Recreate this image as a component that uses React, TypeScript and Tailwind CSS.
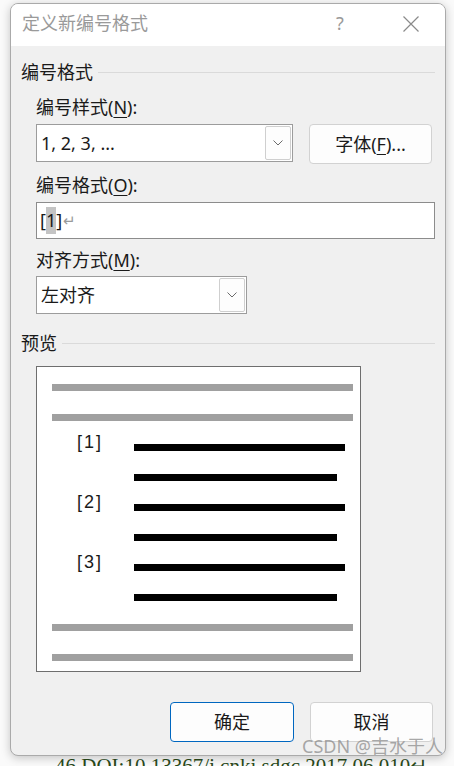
import React from "react";

const Chevron = () => (
  <svg width="10" height="6" viewBox="0 0 10 6" fill="none">
    <path d="M0.5 0.5 L5 5 L9.5 0.5" stroke="#6b6b6b" strokeWidth="1" />
  </svg>
);

const DropButton = () => (
  <div className="flex h-[34px] w-[26px] items-center justify-center rounded-[2px] border border-[#cfcfcf] bg-[#fdfdfd]">
    <Chevron />
  </div>
);

const Label = ({ text, hot, className = "" }: { text: string; hot: string; className?: string }) => (
  <div className={"leading-[24px] text-[18px] text-[#1a1a1a] " + className}>
    {text}(<span className="underline underline-offset-[3px] decoration-1">{hot}</span>):
  </div>
);

const SectionTitle = ({ text }: { text: string }) => (
  <div className="flex items-center gap-[5px] leading-[24px] text-[18px] text-[#1a1a1a]">
    <span>{text}</span>
    <div className="h-px flex-1 bg-[#dadada]" />
  </div>
);

const GrayBar = () => <div className="ml-[15px] h-[7px] w-[301px] bg-[#a0a0a0]" />;

const ItemRow = ({ n }: { n: number }) => (
  <div className="flex h-[7px] items-center">
    <div className="w-[97px] pl-[40px] font-['Liberation_Sans',sans-serif] text-[18px] leading-[7px] tracking-[2px] text-[#1a1a1a] -translate-y-[5px]">
      [{n}]
    </div>
    <div className="h-[7px] w-[211px] bg-black" />
  </div>
);

const SubBar = () => <div className="ml-[97px] h-[7px] w-[203px] bg-black" />;

export default function App() {
  return (
    <div className="relative h-[766px] w-[454px] overflow-hidden bg-[#fafafa] font-['Noto_Sans','Noto_Sans_CJK_SC',sans-serif]">
      <div className="relative z-10 ml-[10px] mt-[3px] flex h-[753px] w-[436px] flex-col overflow-hidden rounded-[8px] border border-[#aaaaaa] bg-[#f0f0f0] shadow-[0_2px_10px_rgba(0,0,0,0.22)]">
        {/* title bar */}
        <div className="flex h-[42px] items-center bg-white pb-[3px] pl-[11px] pr-[26px]">
          <span className="text-[18px] text-[#9a9a9a]">定义新编号格式</span>
          <span className="ml-auto w-[20px] text-center text-[18px] text-[#9a9a9a]">?</span>
          <div className="ml-[53px] flex h-[16px] w-[16px] items-center justify-center">
            <svg width="16" height="16" viewBox="0 0 16 16">
              <path d="M0.5 0.5 L15.5 15.5 M15.5 0.5 L0.5 15.5" stroke="#8a8a8a" strokeWidth="1.2" />
            </svg>
          </div>
        </div>

        {/* body */}
        <div className="flex flex-col px-[10px] pt-[14px]">
          <SectionTitle text="编号格式" />
          <div className="flex flex-col pl-[15px]">
            <Label text="编号样式" hot="N" className="mt-[11px]" />
            <div className="mt-[5px] flex h-[40px] items-start">
              <div className="flex h-[38px] w-[257px] items-center justify-between border border-[#9c9c9c] bg-white pl-[4px] pr-[1px]">
                <span className="text-[18px] text-[#1a1a1a]">1, 2, 3, ...</span>
                <DropButton />
              </div>
              <div className="ml-[16px] flex h-[40px] w-[123px] items-center justify-center rounded-[4px] border border-[#d2d2d2] bg-[#fdfdfd] text-[18px] text-[#1a1a1a]">
                字体(<span className="underline underline-offset-[3px] decoration-1">F</span>)...
              </div>
            </div>
            <Label text="编号格式" hot="O" className="mt-[9px]" />
            <div className="mt-[5px] flex h-[37px] items-center border border-[#8c8c8c] bg-white pl-[3px] text-[18px] text-[#1a1a1a]">
              <span>[</span>
              <span className="bg-[#c4c4c4]">1</span>
              <span>]</span>
              <span className="ml-[1px] text-[15px] text-[#9a9a9a]">↵</span>
            </div>
            <Label text="对齐方式" hot="M" className="mt-[9px]" />
            <div className="mt-[4px] flex h-[38px] w-[211px] items-center justify-between border border-[#9c9c9c] bg-white pl-[4px] pr-[1px]">
              <span className="text-[18px] text-[#1a1a1a]">左对齐</span>
              <DropButton />
            </div>
          </div>

          <div className="mt-[17px]">
            <SectionTitle text="预览" />
          </div>
          <div className="ml-[15px] mt-[11px] flex w-[325px] flex-col gap-[23px] border border-[#6e6e6e] bg-white pb-[10px] pt-[17px]">
            <GrayBar />
            <GrayBar />
            <ItemRow n={1} />
            <SubBar />
            <ItemRow n={2} />
            <SubBar />
            <ItemRow n={3} />
            <SubBar />
            <GrayBar />
            <GrayBar />
          </div>

          <div className="mt-[30px] flex justify-end gap-[16px] pr-[2px]">
            <div className="flex h-[40px] w-[124px] items-center justify-center rounded-[4px] border border-[#0067c0] bg-[#fdfdfd] text-[18px] text-[#1a1a1a]">
              确定
            </div>
            <div className="flex h-[40px] w-[123px] items-center justify-center rounded-[4px] border border-[#d2d2d2] bg-[#fdfdfd] text-[18px] text-[#1a1a1a]">
              取消
            </div>
          </div>
        </div>
      </div>

      <div className="pl-[55px] font-['Liberation_Serif',serif] text-[21px] leading-[20px] text-[#2a4a1a]">
        46 DOI:10.13367/j.cnki.sdgc.2017.06.010↵
      </div>

      <div className="absolute left-[302px] top-[736px] z-20 text-[18px] leading-[20px] text-[rgba(140,140,140,0.75)]">
        CSDN @吉水于人
      </div>
    </div>
  );
}
